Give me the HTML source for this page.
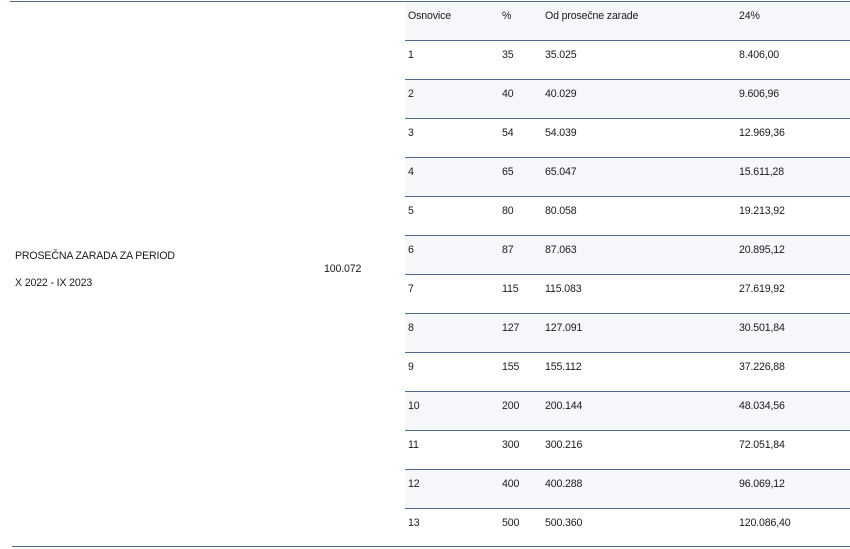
<!DOCTYPE html><html><head><style>
body{margin:0;width:850px;height:549px;background:#fff;font-family:"Liberation Sans",sans-serif;font-size:10.6px;letter-spacing:-0.15px;color:#1a1a1a;position:relative;overflow:hidden}
.t{position:absolute;white-space:nowrap}
.line{position:absolute;height:1px;background:#4a6a8f}
.row{position:absolute;left:405px;width:445px;height:39px}
.sh{background:#f5f7fb}
</style></head><body>
<div class="line" style="left:10px;width:840px;top:1px"></div>
<div class="line" style="left:12px;width:838px;top:546px"></div>
<div class="t" style="left:15px;top:250px">PROSEČNA ZARADA ZA PERIOD</div>
<div class="t" style="left:15px;top:277px">X 2022 - IX 2023</div>
<div class="t" style="left:324px;top:263px">100.072</div>
<div id="tb"></div>
<script>
var d=[["Osnovice","%","Od prosečne zarade","24%"],["1","35","35.025","8.406,00"],["2","40","40.029","9.606,96"],["3","54","54.039","12.969,36"],["4","65","65.047","15.611,28"],["5","80","80.058","19.213,92"],["6","87","87.063","20.895,12"],["7","115","115.083","27.619,92"],["8","127","127.091","30.501,84"],["9","155","155.112","37.226,88"],["10","200","200.144","48.034,56"],["11","300","300.216","72.051,84"],["12","400","400.288","96.069,12"],["13","500","500.360","120.086,40"]];
var h="",xs=[408,502,545,739];
d.forEach(function(r,i){var y=2+i*39;h+='<div class="row'+(i%2==0?' sh':'')+'" style="top:'+y+'px;height:'+(i==0?38:39)+'px"></div>';
if(i>0)h+='<div class="line" style="left:405px;width:445px;top:'+(y-1)+'px"></div>';
r.forEach(function(c,j){h+='<div class="t" style="left:'+xs[j]+'px;top:'+(y+8)+'px">'+c+'</div>'});});
document.getElementById("tb").innerHTML=h;
</script>
</body></html>
